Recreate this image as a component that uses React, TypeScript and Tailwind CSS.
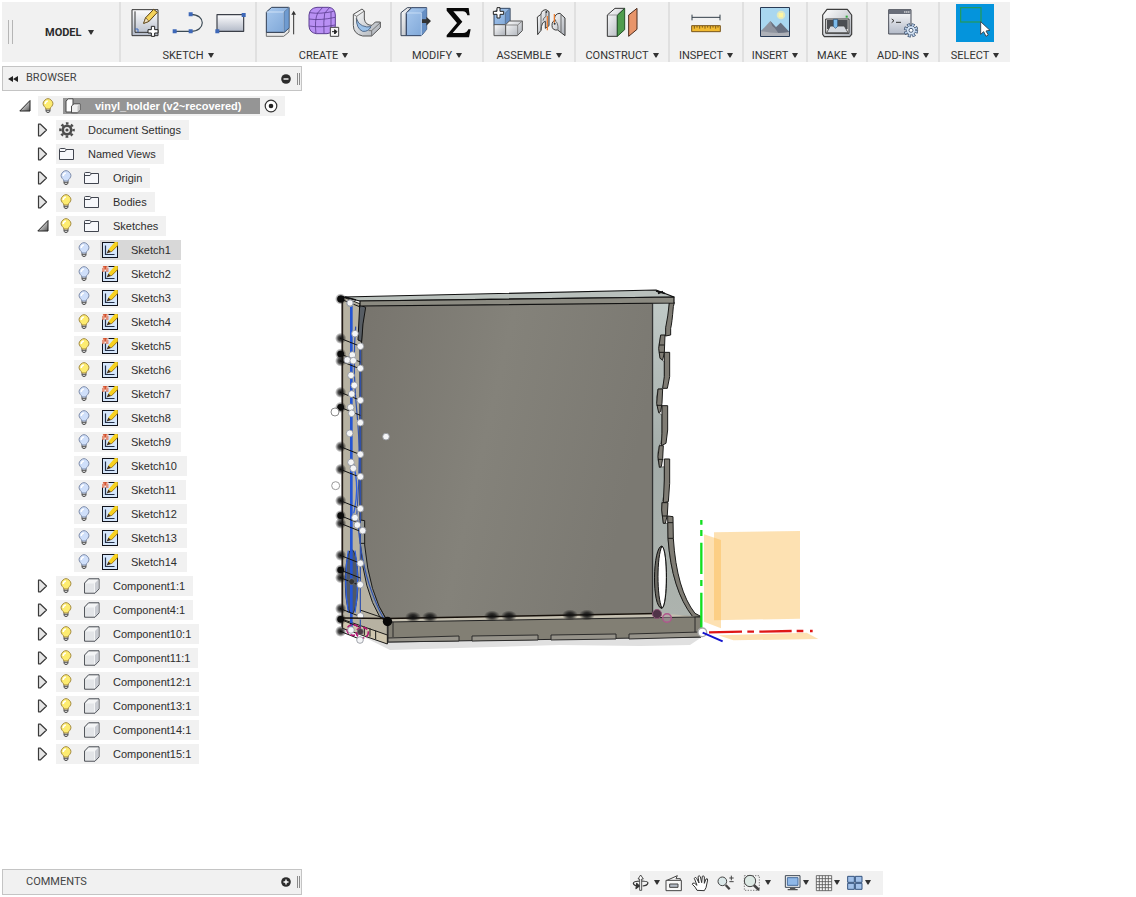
import type { ReactNode } from "react";

/* ---------- toolbar drawings ---------- */

function Pic({ x, children }: { x: number; children: ReactNode }) {
  return (
    <svg viewBox={`${x} 12 96 114`} className="h-[38px] w-8 shrink-0" aria-hidden="true" strokeLinejoin="round">
      {children}
    </svg>
  );
}

function Defs() {
  return (
    <svg width="0" height="0" className="absolute" aria-hidden="true">
      <defs>
        <linearGradient id="sheet" x1="0" y1="0" x2="0" y2="1">
          <stop offset="0" stopColor="#fdfdfe" />
          <stop offset="1" stopColor="#b3bac8" />
        </linearGradient>
        <linearGradient id="blue" x1="0" y1="0" x2="1" y2="1">
          <stop offset="0" stopColor="#a9c9ee" />
          <stop offset="1" stopColor="#7ba4d6" />
        </linearGradient>
        <linearGradient id="gray" x1="0" y1="0" x2="1" y2="1">
          <stop offset="0" stopColor="#ffffff" />
          <stop offset="1" stopColor="#a9aeb6" />
        </linearGradient>
        <linearGradient id="wedge" x1="0" y1="0" x2="1" y2="1">
          <stop offset="0.3" stopColor="#e4e4e4" />
          <stop offset="1" stopColor="#555555" />
        </linearGradient>
        <radialGradient id="blob">
          <stop offset="0" stopColor="#111" />
          <stop offset="0.45" stopColor="#111" stopOpacity="0.75" />
          <stop offset="1" stopColor="#111" stopOpacity="0" />
        </radialGradient>
        <linearGradient id="panel" x1="0" y1="0" x2="1" y2="0.25">
          <stop offset="0" stopColor="#77746d" />
          <stop offset="0.5" stopColor="#84827a" />
          <stop offset="1" stopColor="#7b7972" />
        </linearGradient>
        <linearGradient id="side" x1="0" y1="0" x2="0" y2="1">
          <stop offset="0" stopColor="#c0c9c6" />
          <stop offset="0.5" stopColor="#a3aca9" />
          <stop offset="1" stopColor="#adb3ae" />
        </linearGradient>
      </defs>
    </svg>
  );
}

const SketchPic = () => (
  <Pic x={390}>
    <rect x="399" y="29" width="78" height="78" fill="url(#sheet)" stroke="#333" strokeWidth="3" />
    <path d="M408 34V97H477" fill="none" stroke="#333" strokeWidth="3" />
    <path d="M408 87H417V97" fill="none" stroke="#3f6bbb" strokeWidth="3" />
    <path d="M434 70L440 53L464 28L475 37L450 64Z" fill="#f4d35b" stroke="#594012" strokeWidth="3" />
    <path d="M434 70L440 53L450 64Z" fill="#f2e3c4" stroke="#594012" strokeWidth="2" />
    <path d="M457 79h10v10h10v10h-10v10h-10v-10h-10v-10h10z" fill="#fff" stroke="#222" strokeWidth="3" />
  </Pic>
);
const LinePic = () => (
  <Pic x={520}>
    <path d="M528 94H576C622 94 623 43 576 43" fill="none" stroke="#3b4a55" strokeWidth="3.5" />
    <path d="M522 88h12v12h-12zM570 88h12v12h-12zM570 37h12v12h-12z" fill="#3e68b8" />
  </Pic>
);
const RectPic = () => (
  <Pic x={650}>
    <rect x="656" y="44" width="80" height="50" fill="url(#sheet)" stroke="#3b3f48" strokeWidth="3.5" />
    <path d="M730 39h12v12h-12zM651 88h12v12h-12z" fill="#3e68b8" />
  </Pic>
);
const ExtrudePic = () => (
  <Pic x={30}>
    <path d="M34 97L87 97L102 84V96L86 109H34Z" fill="#e8e8e8" stroke="#555" strokeWidth="2.5" />
    <path d="M34 36L50 22H102V84L87 97H34Z" fill="url(#blue)" stroke="#2f3d52" strokeWidth="3" />
    <path d="M34 36H87V97M87 36L102 22" fill="none" stroke="#eaf3ff" strokeWidth="2" />
    <path d="M87 36L102 22V84L87 97Z" fill="#6f9bd0" stroke="#3d5676" strokeWidth="1.5" />
    <path d="M116 103V36" stroke="#333" strokeWidth="3" />
    <path d="M109 44L116 32L123 44Z" fill="#333" />
  </Pic>
);
const FormPic = () => (
  <Pic x={159}>
    <path d="M162 45Q164 24 186 22H221Q240 24 241 45V78Q238 98 216 101H184Q163 98 162 78Z" fill="#b990f4" stroke="#5d3f92" strokeWidth="3" />
    <path d="M162 57Q196 62 240 52M163 78Q196 84 240 75M165 38Q195 43 236 34M183 101Q178 60 188 39L203 22M207 101Q205 64 209 40L224 22M228 96V36" fill="none" stroke="#5d3f92" strokeWidth="2.5" />
    <rect x="226" y="82" width="25" height="27" fill="#f7f7f7" stroke="#444" strokeWidth="3" />
    <path d="M231 95H243M239 89L246 95L239 102Z" fill="#222" stroke="#222" strokeWidth="3" />
  </Pic>
);
const SweepPic = () => (
  <Pic x={288}>
    <path d="M295 43L321 27L328 33V57Q331 76 351 76L361 66H376V83L350 108H323Q295 102 295 76Z" fill="url(#gray)" stroke="#555" strokeWidth="3" />
    <path d="M304 55Q309 72 322 77Q335 83 348 80Q340 96 323 94Q304 86 304 55Z" fill="#9bc1e8" stroke="#3c587c" strokeWidth="2.5" />
    <path d="M295 43L305 49V64M350 108V92L376 68M350 92H341M305 49L328 33" fill="none" stroke="#666" strokeWidth="2.5" />
  </Pic>
);
const PressPic = () => (
  <Pic x={436}>
    <path d="M439 38L458 23L471 23L455 39V107H439Z" fill="url(#gray)" stroke="#39465a" strokeWidth="3" />
    <path d="M455 39L471 23H516V88L500 107H455Z" fill="url(#blue)" stroke="#2f4060" strokeWidth="3" />
    <path d="M500 38L516 23V88L500 107Z" fill="#668fc4" />
    <path d="M455 39H500V107" fill="none" stroke="#dcebfd" strokeWidth="2" />
    <path d="M502 58H515V50L529 63L515 77V69H502Z" fill="#333" />
  </Pic>
);
const SigmaPic = () => (
  <Pic x={565}>
    <path d="M576 24H642L645 46H638Q635 34 624 34H596L623 65L594 99H625Q637 99 641 88H648L643 112H576V106L607 69L576 32Z" fill="#080808" />
  </Pic>
);
const NewComponentPic = () => (
  <Pic x={710}>
    <path d="M716 38L729 25H764V66L750 76H716Z" fill="url(#blue)" stroke="#334763" strokeWidth="3" />
    <path d="M750 39L764 25V66L750 76Z" fill="#668fc4" stroke="#456" strokeWidth="1.5" />
    <path d="M716 74H751V107H716Z" fill="url(#gray)" stroke="#555" strokeWidth="3" />
    <path d="M751 74L762 63H801V92L786 107H751Z" fill="url(#gray)" stroke="#555" strokeWidth="3" />
    <path d="M751 75H787V107M787 75L801 63" fill="none" stroke="#777" strokeWidth="2.5" />
    <path d="M725 23h9v11h11v9h-11v11h-9v-11h-11v-9h11z" fill="#fff" stroke="#222" strokeWidth="3" />
  </Pic>
);
const JointPic = () => (
  <Pic x={839}>
    <path d="M846 51L857 43Q858 30 872 29L881 35V77L870 85V64Q858 66 857 91L847 104Z" fill="url(#gray)" stroke="#3b3b3b" strokeWidth="3" />
    <path d="M857 43V91M872 38V49Q863 54 863 62" fill="none" stroke="#555" strokeWidth="2.5" />
    <path d="M897 57Q899 40 914 40L929 54V107L907 90Q890 92 890 76Q890 62 901 61Z" fill="url(#gray)" stroke="#3b3b3b" strokeWidth="3" />
    <path d="M917 44V97M899 62Q909 67 908 89" fill="none" stroke="#555" strokeWidth="2.5" />
    <path d="M876 48V91M897 42V68" stroke="#f17924" strokeWidth="3.5" />
    <circle cx="873" cy="36" r="3" fill="#333" />
    <circle cx="898" cy="71" r="3" fill="#333" />
  </Pic>
);
const PlanePic = () => (
  <Pic x={108}>
    <path d="M112 45L135 25H164L142 46V109H112Z" fill="url(#gray)" stroke="#333" strokeWidth="3" />
    <path d="M142 46L164 25V89L142 109Z" fill="#4f9c4d" stroke="#25552a" strokeWidth="3" />
    <path d="M112 45H142" stroke="#777" strokeWidth="2" />
    <path d="M176 45L201 25V88L176 109Z" fill="#e8956a" stroke="#4b2a1c" strokeWidth="3" />
  </Pic>
);
const RulerPic = () => (
  <Pic x={359}>
    <path d="M365 52H449M365 44V61M449 44V61" stroke="#333e49" strokeWidth="3" />
    <rect x="364" y="77" width="86" height="18" fill="#f1ba31" stroke="#79561b" strokeWidth="3" />
    <path d="M372 78v8M380 78v5M388 78v8M396 78v5M404 78v8M412 78v5M420 78v8M428 78v5M436 78v8M443 78v5" stroke="#684b14" strokeWidth="2.5" />
  </Pic>
);
const PhotoPic = () => (
  <Pic x={567}>
    <rect x="572" y="23" width="86" height="86" fill="#a9d7f0" />
    <circle cx="633" cy="45" r="13" fill="#f6efae" opacity=".7" />
    <rect x="626" y="39" width="13" height="13" fill="#fff5a0" />
    <path d="M572 93L584 82L601 63L618 82L632 68L658 96V109H572Z" fill="#8f949f" />
    <path d="M601 63L607 78L614 84L632 109H658V96L632 68L618 82Z" fill="#697181" />
    <path d="M572 93Q618 104 658 96V109H572Z" fill="#aeb1b8" />
    <rect x="571.5" y="22.5" width="87" height="87" fill="none" stroke="#283a55" strokeWidth="3" />
  </Pic>
);
const PrinterPic = () => (
  <Pic x={63}>
    <path d="M68 45L81 28H142L155 45V103L149 110H73L68 103Z" fill="url(#gray)" stroke="#3c3c3c" strokeWidth="3.5" />
    <path d="M77 57H147V100H77Z" fill="#e1e1e1" stroke="#3a3a3a" strokeWidth="3" />
    <path d="M81 60H143V87H81Z" fill="#4b4e52" />
    <path d="M80 98L91 78H133L144 98Z" fill="#d5d9df" stroke="#444" strokeWidth="2.5" />
    <path d="M100 58H113V79L107 85L100 79Z" fill="#7dbbeb" stroke="#2c4d70" strokeWidth="2" />
    <rect x="137" y="47" width="6" height="6" fill="#2dab38" />
  </Pic>
);
const ScriptPic = () => (
  <Pic x={261}>
    <rect x="266" y="29" width="67" height="73" fill="url(#sheet)" stroke="#4a4e58" strokeWidth="3" />
    <rect x="267" y="30" width="65" height="12" fill="#686d7a" />
    <path d="M313 36H328" stroke="#fff" strokeWidth="4" strokeDasharray="3 3" />
    <path d="M275 57L282 62L275 68M288 67H303" fill="none" stroke="#333" strokeWidth="3" />
    <circle cx="333" cy="91" r="16" fill="none" stroke="#344966" strokeWidth="11" strokeDasharray="8 4.566" />
    <circle cx="333" cy="91" r="14" fill="#d7e5f5" stroke="#344966" strokeWidth="2.5" />
    <circle cx="333" cy="91" r="16" fill="none" stroke="#b9cfeb" strokeWidth="7" strokeDasharray="5 7.566" strokeDashoffset="-1.5" />
    <circle cx="333" cy="91" r="6" fill="#fff" stroke="#344966" strokeWidth="2.5" />
  </Pic>
);
const SelectPic = () => (
  <svg viewBox="468 12 114 114" className="size-[38px] bg-[#0494dc]" aria-hidden="true">
    <rect x="482" y="23" width="61" height="43" fill="none" stroke="#269a55" strokeWidth="3.5" />
    <path d="M542 65V103L551 95L558 109L565 105L558 93L570 91Z" fill="#fff" stroke="#3c4a57" strokeWidth="3" />
  </svg>
);

function Caret() {
  return (
    <svg viewBox="0 0 6 5" className="mb-0.5 h-[5px] w-1.5 shrink-0" aria-hidden="true">
      <path d="M0 0H6L3.5 4.5H2.5Z" fill="#333" />
    </svg>
  );
}

type Tool = { name: string; pic: ReactNode };
const groups: { label: string; width: string; tools: Tool[] }[] = [
  { label: "SKETCH", width: "w-[136px]", tools: [{ name: "Create sketch", pic: <SketchPic /> }, { name: "Line", pic: <LinePic /> }, { name: "Rectangle", pic: <RectPic /> }] },
  { label: "CREATE", width: "w-[135px]", tools: [{ name: "Extrude", pic: <ExtrudePic /> }, { name: "Create form", pic: <FormPic /> }, { name: "Sweep", pic: <SweepPic /> }] },
  { label: "MODIFY", width: "w-[92px]", tools: [{ name: "Press pull", pic: <PressPic /> }, { name: "Change parameters", pic: <SigmaPic /> }] },
  { label: "ASSEMBLE", width: "w-[92px]", tools: [{ name: "New component", pic: <NewComponentPic /> }, { name: "Joint", pic: <JointPic /> }] },
  { label: "CONSTRUCT", width: "w-[94px]", tools: [{ name: "Offset plane", pic: <PlanePic /> }] },
  { label: "INSPECT", width: "w-[74px]", tools: [{ name: "Measure", pic: <RulerPic /> }] },
  { label: "INSERT", width: "w-16", tools: [{ name: "Attached canvas", pic: <PhotoPic /> }] },
  { label: "MAKE", width: "w-[60px]", tools: [{ name: "3D print", pic: <PrinterPic /> }] },
  { label: "ADD-INS", width: "w-[72px]", tools: [{ name: "Scripts and add-ins", pic: <ScriptPic /> }] },
  { label: "SELECT", width: "w-[72px]", tools: [{ name: "Select", pic: <SelectPic /> }] },
];

function Toolbar() {
  return (
    <header className="mx-0.5 mt-0.5 flex h-[60px] w-fit bg-[#f1f1f1]">
      <div className="flex w-[117px] items-center">
        <span className="ml-1.5 h-6 w-[5px] border-x border-[#b5b5b5]" />
        <button className="mt-0.5 ml-8 flex items-center gap-1.5 text-[11px] leading-4 font-bold text-[#2b2b2b]">
          MODEL
          <Caret />
        </button>
      </div>
      {groups.map((g) => (
        <div key={g.label} className={`${g.width} flex shrink-0 flex-col items-center border-l-2 border-[#e0e0e0] pt-0.5`}>
          <div className="flex gap-[11px]">
            {g.tools.map((t) => (
              <button key={t.name} aria-label={t.name}>
                {t.pic}
              </button>
            ))}
          </div>
          <button className="mt-1.5 flex items-center gap-1 text-[11px] leading-4 whitespace-nowrap">
            {g.label}
            <Caret />
          </button>
        </div>
      ))}
    </header>
  );
}

/* ---------- browser tree ---------- */

function Bulb({ on }: { on: boolean }) {
  return (
    <svg viewBox="0 0 12 16" className="h-4 w-3 shrink-0" aria-hidden="true">
      <path d="M4 10.5H8V13.5Q6 16 4 13.5Z" fill="#d0d0d0" stroke="#555" strokeWidth="1" />
      <path d="M3.9 11Q3.8 9.6 2.4 8.6A4.7 4.7 0 1 1 9.6 8.6Q8.2 9.6 8.1 11Z" fill={on ? "#fdec70" : "#cfdffa"} stroke={on ? "#a48b3e" : "#7d8cab"} strokeWidth="1" />
      <path d="M3.2 6Q3.4 3.6 5.8 3" fill="none" stroke="#fff" strokeWidth="1.5" />
      <path d="M4 12.5H8" stroke="#555" strokeWidth=".8" />
    </svg>
  );
}
const Folder = () => (
  <svg viewBox="0 0 16 16" className="size-4 shrink-0" aria-hidden="true">
    <path d="M.5 13.5V3.5Q.5 2.5 1.5 2.5H5.8L7 3.5H14.5V13.5Z" fill="#f7f8fb" stroke="#41454f" />
    <path d="M.5 5.5H6L7.5 3.5" fill="none" stroke="#41454f" />
  </svg>
);
const Gear = () => (
  <svg viewBox="0 0 16 16" className="size-4 shrink-0" aria-hidden="true">
    <circle cx="8" cy="8" r="6.6" fill="none" stroke="#4c4c4c" strokeWidth="2.4" strokeDasharray="2.6 2.584" strokeDashoffset="1.3" />
    <circle cx="8" cy="8" r="4.2" fill="#eee" stroke="#4c4c4c" strokeWidth="2.6" />
    <circle cx="8" cy="8" r="1.6" fill="#4c4c4c" />
  </svg>
);
const Cube = () => (
  <svg viewBox="0 0 16 16" className="size-4 shrink-0" aria-hidden="true" strokeLinejoin="round">
    <path d="M.6 5L4.6 .8H15V11L11 15.2H.6Z" fill="#f4f5f6" stroke="#44484f" />
    <path d="M11 5L14.5 1.5V11L11 14.5Z" fill="#c9ccd2" />
    <path d="M2 5.5H10V14H2Z" fill="#e3e5e8" />
  </svg>
);
const Assembly = () => (
  <svg viewBox="0 0 16 16" className="size-4 shrink-0" aria-hidden="true" strokeLinejoin="round">
    <path d="M1 3L3.5 .8H8V14H1Z" fill="#fff" stroke="#4b4b4b" />
    <path d="M6.5 8L9 5.8H15V12L12.5 14.8H6.5Z" fill="#f0f0f0" stroke="#4b4b4b" />
    <path d="M12.5 8L15 6V12L12.5 14.5Z" fill="#c5c5c5" />
  </svg>
);
const SketchIcon = ({ mark }: { mark: boolean }) => (
  <svg viewBox="0 0 16 16" className="size-4 shrink-0" aria-hidden="true">
    <rect x=".5" y=".5" width="15" height="15" fill="#d6e7fb" stroke="#10131c" />
    <path d="M3.5 3.5V12.5H12.5" fill="none" stroke="#23304a" strokeWidth="1.2" />
    <path d="M6.4 7.6L12.8 0H15.8V3.4L9.2 10Z" fill="#f8d21f" />
    <path d="M9.2 10L15.8 3.4" stroke="#a77a10" strokeWidth="1" />
    <path d="M4.6 11.6L6.4 7.6L9.2 10Z" fill="#4a3416" />
    {mark && (
      <g>
        <rect width="6.5" height="5.5" fill="#f8e4dd" />
        <path d="M1 .8H5.5M0 3H6.5M0 5H2.5M4 5H6.5M3.2 0V3" stroke="#d0441e" strokeWidth="1.2" />
      </g>
    )}
  </svg>
);

function Expander({ open }: { open?: boolean }) {
  return (
    <svg viewBox="0 0 12 14" className="h-3.5 w-3 shrink-0" aria-hidden="true" strokeLinejoin="round">
      {open ? (
        <path d="M11 1.5V12H.8Z" fill="url(#wedge)" stroke="#222" />
      ) : (
        <path d="M1.5 1.2H3.5L9.5 7L3.5 12.8H1.5Z" fill="#e6e6e6" stroke="#3a3a3a" strokeWidth="1.2" />
      )}
    </svg>
  );
}

type Row = { name: string; icon: ReactNode; bulb?: boolean; open?: boolean };
const topRows: Row[] = [
  { name: "Document Settings", icon: <Gear /> },
  { name: "Named Views", icon: <Folder /> },
  { name: "Origin", icon: <Folder />, bulb: false },
  { name: "Bodies", icon: <Folder />, bulb: true },
  { name: "Sketches", icon: <Folder />, bulb: true, open: true },
];
const lit = [4, 5, 6];
const marked = [2, 4, 5, 7, 9, 11];
const sketches = Array.from({ length: 14 }, (_, i) => i + 1);
const components = ["1:1", "4:1", "10:1", "11:1", "12:1", "13:1", "14:1", "15:1"];

function TreeRow({ row }: { row: Row }) {
  return (
    <div className="flex h-6 items-center pl-[37px]">
      <button aria-label={`Expand ${row.name}`}>
        <Expander open={row.open} />
      </button>
      <button className="ml-[7px] flex h-5 items-center bg-[#f1f1f1] pr-2 pl-[3px]">
        {row.bulb !== undefined && (
          <span className="mr-3 ml-px">
            <Bulb on={row.bulb} />
          </span>
        )}
        {row.icon}
        <span className="ml-[13px]">{row.name}</span>
      </button>
    </div>
  );
}

function Tree() {
  return (
    <nav className="mt-[3px] font-['Liberation_Sans',Arial,sans-serif] text-[11px] leading-4 text-[#2e2e2e]">
      <div className="flex h-6 items-center pl-[19px]">
        <button aria-label="Collapse document">
          <Expander open />
        </button>
        <div className="ml-[7px] flex h-5 items-center bg-[#f1f1f1] pr-[7px] pl-1">
          <Bulb on />
          <button className="ml-[9px] flex h-4 items-center bg-[#959595] pr-[19px] pl-0.5 font-bold whitespace-nowrap text-white">
            <Assembly />
            <span className="ml-3.5">vinyl_holder (v2~recovered)</span>
          </button>
          <svg viewBox="0 0 14 14" className="ml-1 size-3.5" aria-hidden="true">
            <circle cx="7" cy="7" r="5.8" fill="#fff" stroke="#333" strokeWidth="1.2" />
            <circle cx="7" cy="7" r="2.3" fill="#222" />
          </svg>
        </div>
      </div>
      {topRows.map((r) => (
        <TreeRow key={r.name} row={r} />
      ))}
      {sketches.map((n) => (
        <div key={n} className="flex h-6 items-center pl-[74px]">
          <button className={`flex h-5 items-center pr-2.5 ${n === 1 ? "bg-[#d8d8d8]" : "bg-[#f1f1f1]"}`}>
            <span className="flex h-5 w-[26px] items-center bg-[#f1f1f1] pl-1">
              <Bulb on={lit.includes(n)} />
            </span>
            <span className="ml-0.5">
              <SketchIcon mark={marked.includes(n)} />
            </span>
            <span className="ml-[13px]">Sketch{n}</span>
          </button>
        </div>
      ))}
      {components.map((c) => (
        <TreeRow key={c} row={{ name: `Component${c}`, icon: <Cube />, bulb: true }} />
      ))}
    </nav>
  );
}

function PanelBar({ title, sign, arrows, className }: { title: string; sign: string; arrows?: boolean; className: string }) {
  return (
    <div className={`flex w-[300px] shrink-0 items-center border border-[#c4c4c4] bg-[#f1f1f1] text-[11px] text-[#444] ${className}`}>
      <span className="flex w-[23px] justify-center pr-1">
        {arrows && (
          <svg viewBox="0 0 10 6" className="h-1.5 w-2.5" aria-hidden="true">
            <path d="M5 0V6L0 3ZM10 0V6L5 3Z" fill="#222" />
          </svg>
        )}
      </span>
      <span className="flex-1">{title}</span>
      <button aria-label={`Toggle ${title}`}>
        <svg viewBox="0 0 10 10" className="size-2.5" aria-hidden="true">
          <circle cx="5" cy="5" r="4.8" fill="#2c2c2c" />
          <path d={sign} stroke="#fff" strokeWidth="1.4" />
        </svg>
      </button>
      <span className="mr-px ml-1.5 h-3 w-[3px] border-x border-[#8a8a8a]" />
    </div>
  );
}

/* ---------- model viewport ---------- */

const anchors = [57, 175, 222, 243, 337, 382, 500, 568, 662, 707, 730, 826, 870, 893, 986, 1018, 1054];
const solid = [57, 222, 382, 707, 870, 1018];
const points = [
  [75, 70], [90, 161], [106, 199], [82, 225], [67, 240], [85, 242], [106, 265], [78, 286], [88, 316], [80, 342],
  [106, 361], [77, 382], [80, 400], [106, 428], [74, 460], [106, 523], [78, 547], [85, 565], [106, 590], [106, 686],
  [90, 713], [97, 735], [113, 752], [106, 850], [106, 914], [106, 1008], [78, 1050], [105, 1080], [183, 470],
];
const lowerBlobs = [[413, 617], [430, 617], [492, 616], [509, 616], [570, 615], [587, 615]];

function Model() {
  return (
    <svg viewBox="320 280 520 380" className="mt-[218px] ml-[18px] h-[380px] w-[520px] shrink-0" role="img" aria-label="Vinyl holder model" strokeLinejoin="round">
      <path d="M362 636L390 650L560 645L640 646L690 645L702 637Z" fill="#e0e0e0" />
      {/* back panel */}
      <path d="M361 305L653 303V616L388 621L361 600Z" fill="url(#panel)" stroke="#2b2a27" strokeWidth=".8" />
      {/* right side */}
      <g transform="translate(640 280) scale(.33333)">
        <path
          fillRule="evenodd"
          d="M38 68H88Q86 120 77 145V168H62Q55 190 58 220L65 240L73 245V300L68 325L54 328Q46 350 52 376L58 400L66 405V470Q64 490 58 498Q50 520 54 540L60 562L73 560V640L66 668Q64 700 70 730H84V775Q95 930 160 1010L38 1003ZM66 800C42 800 38 984 66 984C82 984 84 800 66 800Z"
          fill="url(#side)"
          stroke="#3b3c39"
          strokeWidth="2"
        />
        <path d="M66 798C38 798 34 985 66 985C50 950 50 830 66 798Z" fill="#6d6b64" stroke="#111" strokeWidth="3" />
        <path d="M66 798C84 812 84 975 66 985" fill="none" stroke="#111" strokeWidth="3" />
        <g fill="#7f7c74" stroke="#1a1a18" strokeWidth="3">
          <path d="M88 68H103L100 80Q96 130 92 145V165L77 168V143Q84 110 88 68Z" />
          <path d="M62 165H75L73 218L68 240L60 235L56 205ZM57 217H73M57 195H73" />
          <path d="M73 217H89V290L82 325H68L73 290Z" />
          <path d="M54 327H68L66 370L62 395L56 398L50 370ZM50 376H66" />
          <path d="M66 377H83V450L78 490L64 497L66 460Z" />
          <path d="M58 497H70L68 535L64 560L58 562L54 530ZM54 538H70" />
          <path d="M73 537H89V610L85 665L70 668L73 600Z" />
          <path d="M66 668H84L82 705L76 730H70L65 690ZM66 708H82" />
          <path d="M83 708L99 710L100 775Q110 930 165 1000L184 1010H158Q95 930 84 775ZM84 728H99M84 775H100" />
        </g>
      </g>
      <path d="M652.5 304V615" stroke="#333" strokeWidth="1.2" />
      {/* left side */}
      <g transform="translate(325 280) scale(.33333)">
        <path d="M52 50L106 72L116 82Q106 180 106 400V790Q128 940 187 1022V1090L52 1040Z" fill="#b7b2a2" stroke="#1a1a18" strokeWidth="3" />
        <path d="M104 75L122 82Q112 130 110 185L99 180Z" fill="#575d64" stroke="#111" strokeWidth="3" />
        <path d="M102 200L112 185V720H102Z" fill="#55585c" />
        <path d="M106 720L119 722V795Q132 940 187 1025L165 1012Q115 930 106 790ZM106 790H119" fill="#969a97" stroke="#1a1a18" strokeWidth="3" />
        <path d="M52 1018L187 1065V1092L52 1045Z" fill="#cfc6ae" stroke="#1a1a18" strokeWidth="3" />
        <path d="M105 990L187 1018M118 1040V1065M135 1045V1070M152 1052V1078M80 1030V1054" stroke="#1a1a18" strokeWidth="3" />
        <ellipse cx="80" cy="905" rx="19" ry="96" fill="#4f5867" stroke="#222" strokeWidth="3" />
        <path d="M79 70V1055" stroke="#2555d2" strokeWidth="8" />
        <path d="M92 140Q82 260 96 400T94 720M98 720Q108 850 140 935T185 1022M106 200V1060" fill="none" stroke="#2e50ad" strokeWidth="3.5" />
        <path d="M82 540Q106 620 86 700M70 812Q54 900 70 998M90 812Q106 900 90 998" fill="none" stroke="#2d5fe0" strokeWidth="4" />
        <path d="M52 50V1040" stroke="#241d18" strokeWidth="5" />
        {anchors.map((y) => (
          <g key={y}>
            <path d={`M46 ${y}L106 ${y + 24}`} stroke="#111" strokeWidth="3" />
            <circle cx="47" cy={y} r="17" fill="url(#blob)" />
            {solid.includes(y) && <circle cx="47" cy={y} r="10" fill="#0b0b0b" />}
          </g>
        ))}
        <ellipse cx="84" cy="1050" rx="18" ry="16" fill="none" stroke="#b31672" strokeWidth="5" strokeDasharray="14 6" />
        <ellipse cx="112" cy="1058" rx="18" ry="16" fill="none" stroke="#b31672" strokeWidth="5" strokeDasharray="14 6" />
        {points.map(([x, y]) => (
          <circle key={`${x}-${y}`} cx={x} cy={y} r="10" fill="#f4f5f7" stroke="#8f939b" strokeWidth="2.5" />
        ))}
        <circle cx="30" cy="396" r="12" fill="#fff" stroke="#888" strokeWidth="3" />
        <circle cx="32" cy="617" r="12" fill="#fff" stroke="#999" strokeWidth="3" />
        <circle cx="80" cy="905" r="9" fill="#333" stroke="#777" strokeWidth="2" />
        <circle cx="106" cy="1055" r="9" fill="#4b3b46" stroke="#777" strokeWidth="2" />
      </g>
      {/* top shelf */}
      <path d="M343 297L656 290L674 297L360 301Z" fill="#b9c0bc" stroke="#111" strokeWidth="1.2" />
      <path d="M360 301L674 297V303L360 306Z" fill="#8b8a81" stroke="#111" strokeWidth="1.2" />
      <path d="M656 291L665 293.5M658 293.5L663 291.5M345 297L356 300" stroke="#111" strokeWidth="1.5" />
      <circle cx="341" cy="299" r="3.4" fill="#0b0b0b" />
      <circle cx="350" cy="303" r="3.2" fill="#f4f5f7" stroke="#8f939b" />
      {/* base */}
      <path d="M388 619L658 613L701 617L388 623Z" fill="#c5c0b1" />
      <path d="M388 622L695 617H701V637L388 642Z" fill="#827f74" stroke="#222" strokeWidth="1" />
      <path d="M393 622V637M695 617V637" stroke="#222" strokeWidth=".9" />
      <path d="M388 638L459 636V641L388 642ZM472 636L538 635V640L472 641ZM551 635L616 634V639L551 640ZM629 634L701 632V637L629 639Z" fill="#96938a" stroke="#222" strokeWidth=".9" />
      <path d="M343 618L388 618.5L657 613.5" fill="none" stroke="#17110b" strokeWidth="1.3" />
      {lowerBlobs.map(([x, y]) => (
        <ellipse key={x} cx={x} cy={y} rx="8" ry="5.5" fill="url(#blob)" />
      ))}
      <circle cx="387.5" cy="621.5" r="4.7" fill="#080808" />
      <circle cx="657" cy="614" r="4.5" fill="#503348" stroke="#8b5275" strokeWidth="1" />
      <circle cx="667" cy="618" r="4.3" fill="#a5939f" fillOpacity=".5" stroke="#b0558d" strokeWidth="1.4" />
      {/* origin planes and axes */}
      <g transform="translate(640 280) scale(.33333)">
        <g fill="#fbb848" fillOpacity=".42">
          <path d="M222 757L480 753V1016L222 1021Z" />
          <path d="M192 763L243 780V1045L192 1025Z" />
          <path d="M235 1066L500 1058L535 1077L280 1081Z" />
        </g>
        <path d="M184 720V734M184 750V768M184 788V882M184 900V918M184 938V1045" stroke="#12df20" strokeWidth="7" />
        <path d="M207 1057L306 1055M322 1055H342M358 1055L455 1053M470 1053H490M510 1053H518" stroke="#df1717" strokeWidth="7" />
        <circle cx="187" cy="1057" r="13" fill="#fff" stroke="#aaa" strokeWidth="4" />
        <path d="M188 1058L248 1084" stroke="#1414cc" strokeWidth="6" />
      </g>
    </svg>
  );
}

/* ---------- navigation bar ---------- */

type NavTool = { name: string; box: string; art: ReactNode; caret?: "near" | "far"; gap: string };
const navTools: NavTool[] = [
  {
    name: "Orbit", box: "22 27 54 54", caret: "far", gap: "",
    art: (
      <g fill="none" stroke="#333" strokeWidth="3.5">
        <path d="M70 54Q70 48 48 48T26 55Q27 62 42 63M54 63Q68 62 70 54" />
        <path d="M45 76V42H40L48 30L56 42H51V76Z" fill="#fff" strokeWidth="2.5" />
        <path d="M36 55L44 63L34 71Z" fill="#333" />
      </g>
    ),
  },
  {
    name: "Look at", box: "121 27 54 54", gap: "ml-[5px]",
    art: (
      <g fill="#f8f8f8" stroke="#444" strokeWidth="3">
        <path d="M127 46L158 32L154 41H167V46" />
        <path d="M124 46H170V77H124Z" />
        <path d="M135 57H160V67H135Z" fill="#b5bcc6" />
      </g>
    ),
  },
  {
    name: "Pan", box: "199 27 54 54", gap: "ml-2",
    art: (
      <path d="M217 76Q213 66 203 58Q203 52 210 55L217 61L209 40Q211 34 216 40L223 54L220 35Q223 29 227 35L231 53L233 34Q237 30 239 36L239 55L244 42Q249 39 249 45L244 68L239 77Z" fill="#fff" stroke="#333" strokeWidth="3" />
    ),
  },
  {
    name: "Zoom", box: "276 27 54 54", gap: "ml-2",
    art: (
      <g fill="none" stroke="#444" strokeWidth="3">
        <path d="M302 60L314 73" strokeWidth="7" />
        <circle cx="292" cy="49" r="13" fill="#dce9ea" />
        <path d="M313 39H326M319 32V46M313 50H326" />
      </g>
    ),
  },
  {
    name: "Fit", box: "354 27 54 54", caret: "far", gap: "ml-2",
    art: (
      <g fill="none" stroke="#444" strokeWidth="3">
        <rect x="358" y="32" width="45" height="44" strokeDasharray="4 4" strokeWidth="2" />
        <path d="M387 61L402 75" strokeWidth="8" />
        <circle cx="375" cy="48" r="17" fill="#dce9e4" />
      </g>
    ),
  },
  {
    name: "Display settings", box: "478 27 54 54", caret: "near", gap: "ml-[13px]",
    art: (
      <g stroke="#3d4652" strokeWidth="3">
        <path d="M482 32H526V67H482Z" fill="#f1f3f5" />
        <path d="M488 38H520V61H488Z" fill="#8fb8e8" stroke="#476c9d" />
        <path d="M496 68H512V72H519V76H489V72H496Z" fill="#555" stroke="none" />
      </g>
    ),
  },
  {
    name: "Grid and snaps", box: "570 27 54 54", caret: "near", gap: "ml-1.5",
    art: (
      <path d="M574 32H620V77H574ZM583 32V77M592 32V77M601 32V77M610 32V77M574 41H620M574 50H620M574 59H620M574 68H620" fill="#f7f7f7" stroke="#555" strokeWidth="2.5" />
    ),
  },
  {
    name: "Viewports", box: "662 27 54 54", caret: "near", gap: "ml-1.5",
    art: (
      <path d="M667 34H687V52H667ZM690 34H710V52H690ZM667 55H687V73H667ZM690 55H710V73H690Z" fill="#a2c1e9" stroke="#34537f" strokeWidth="3" />
    ),
  },
];

function NavBar() {
  return (
    <div className="ml-[328px] flex h-6 items-center bg-[#f1f1f1] pr-3 pl-0.5">
      {navTools.map((t) => (
        <button key={t.name} aria-label={t.name} className={`flex items-center ${t.caret === "far" ? "gap-1" : "gap-px"} ${t.gap}`}>
          <svg viewBox={t.box} className="size-[18px]" aria-hidden="true" strokeLinejoin="round">
            {t.art}
          </svg>
          {t.caret && <Caret />}
        </button>
      ))}
    </div>
  );
}

export default function App() {
  return (
    <div className="flex min-h-screen flex-col bg-white pb-0.5 font-['Roboto',Arial,sans-serif] text-[#333]">
      <Defs />
      <Toolbar />
      <div className="flex flex-1">
        <aside className="w-[302px] shrink-0 pt-1">
          <PanelBar title="BROWSER" arrows sign="M2.5 5H7.5" className="ml-0.5 h-[25px]" />
          <Tree />
        </aside>
        <main className="flex flex-1">
          <Model />
        </main>
      </div>
      <footer className="flex items-end">
        <PanelBar title="COMMENTS" sign="M2.5 5H7.5M5 2.5V7.5" className="ml-0.5 h-[26px]" />
        <NavBar />
      </footer>
    </div>
  );
}
